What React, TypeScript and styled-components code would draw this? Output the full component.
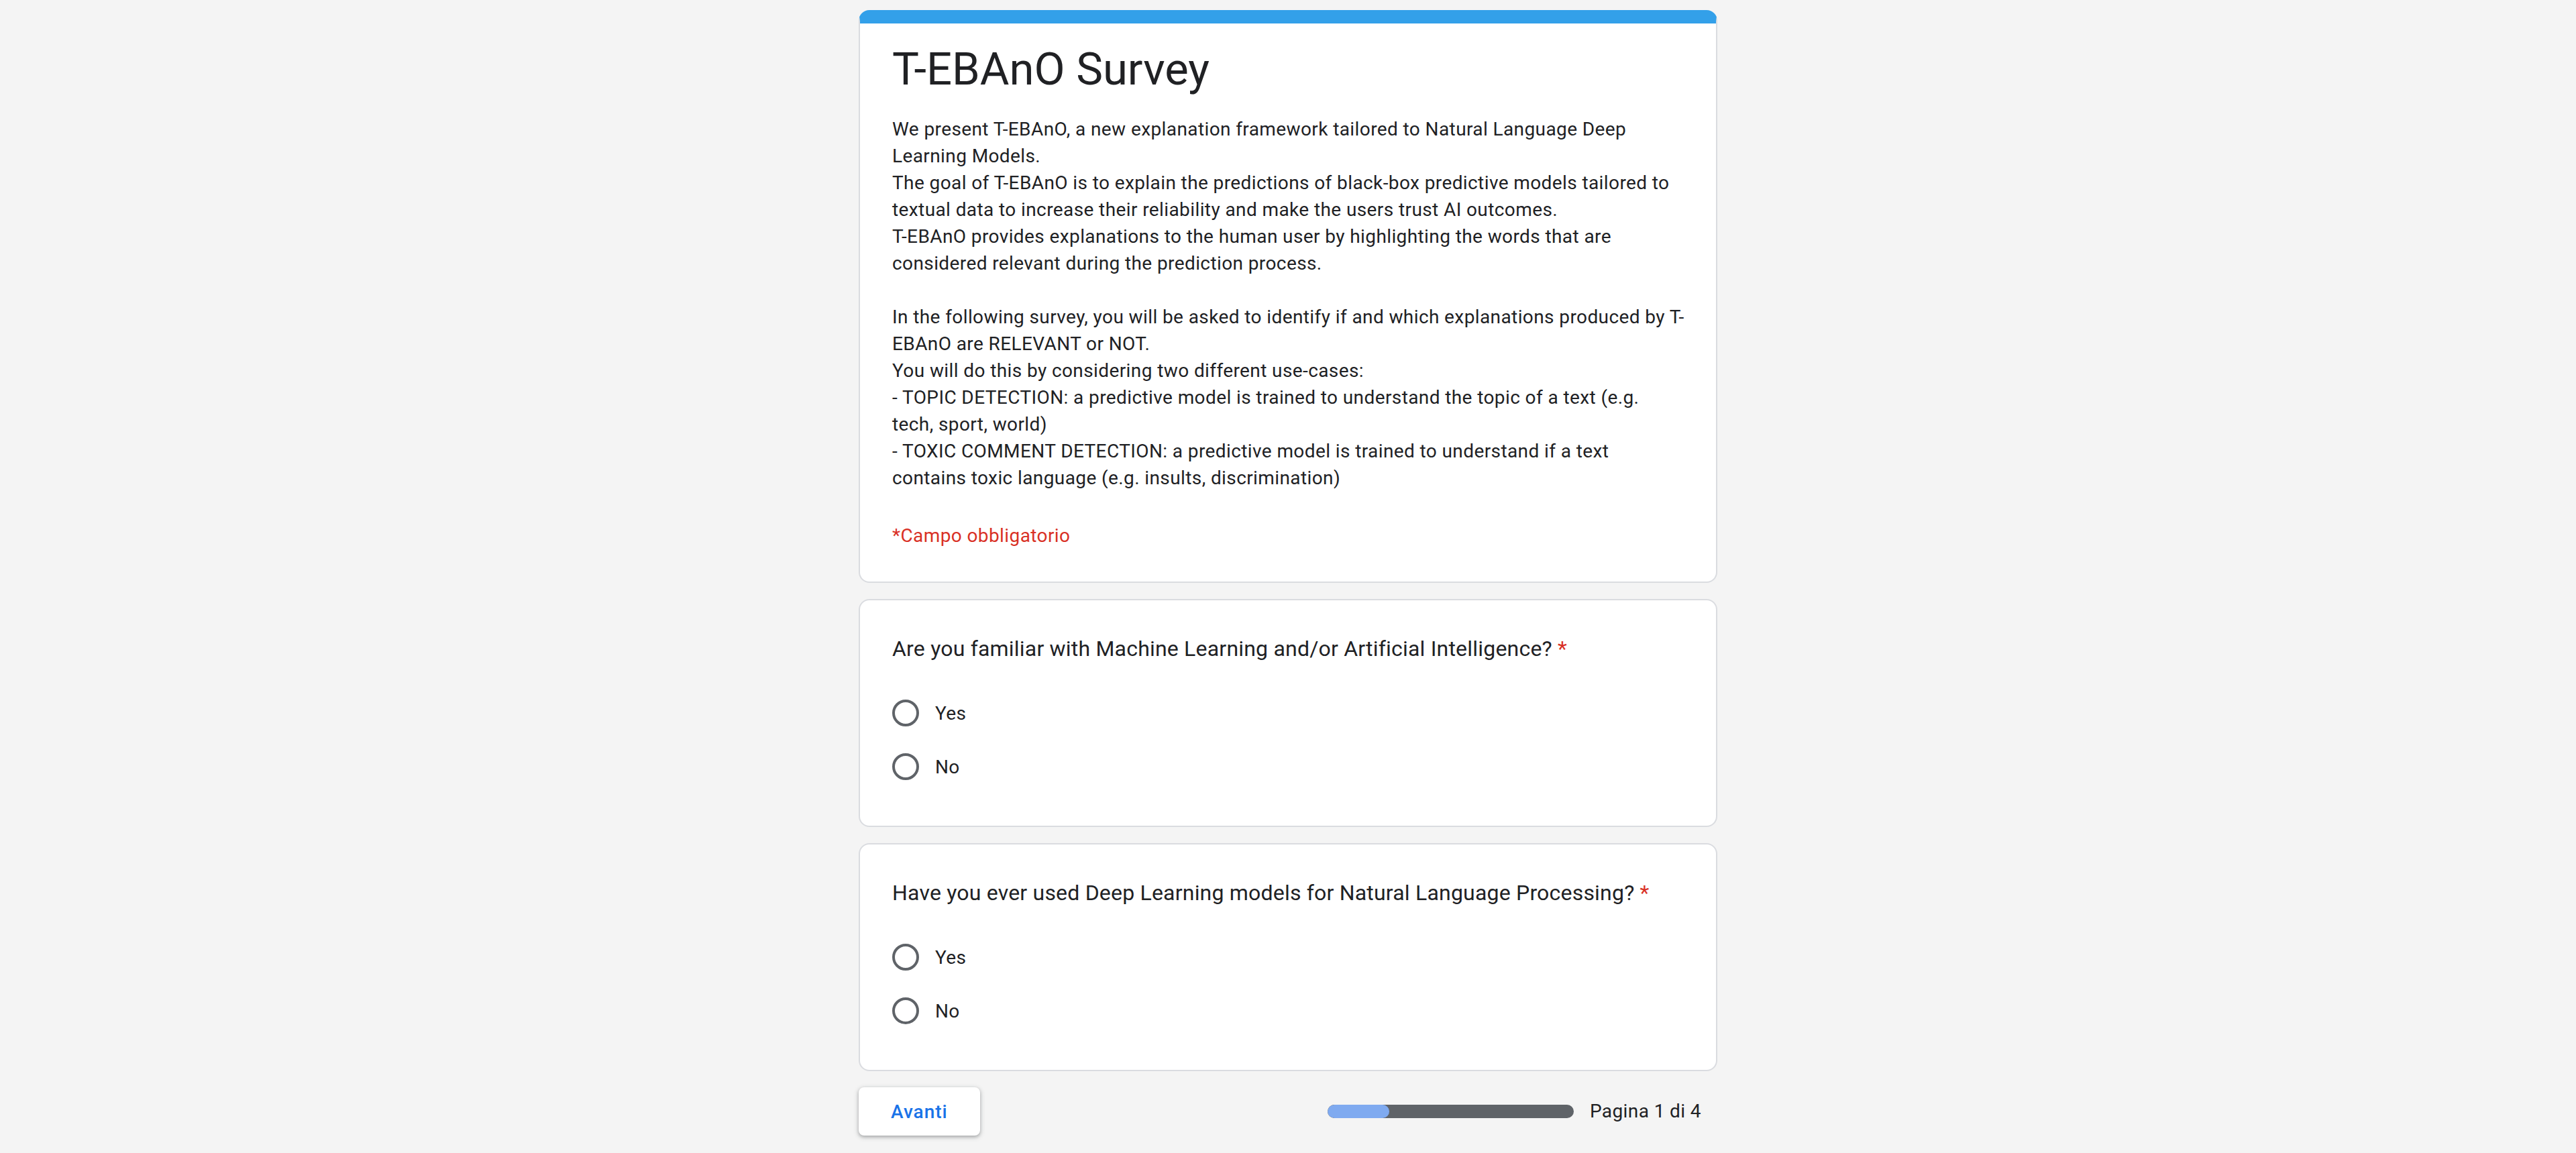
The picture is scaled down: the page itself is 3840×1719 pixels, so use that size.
import React from 'react';
import styled, { createGlobalStyle } from 'styled-components';

const GlobalStyle = createGlobalStyle`
  html, body {
    margin: 0;
    padding: 0;
    background: #f4f4f4;
  }
  body {
    font-family: Roboto, "Liberation Sans", Arial, sans-serif;
    color: #202124;
  }
`;

const Page = styled.div`
  min-height: 100vh;
  background: #f4f4f4;
  padding-top: 15px;
  box-sizing: border-box;
`;

const Column = styled.div`
  width: 1280px;
  margin: 0 auto;
  display: flex;
  flex-direction: column;
  gap: 24px;
`;

const Card = styled.section<{ $accent?: string }>`
  background: #fff;
  border: 2px solid #dadce0;
  border-top: ${(p) => (p.$accent ? `20px solid ${p.$accent}` : '2px solid #dadce0')};
  border-radius: 16px;
  padding: ${(p) => (p.$accent ? '28px 48px 48px' : '48px')};
  box-sizing: border-box;
`;

const Title = styled.h1`
  margin: 0;
  font-family: Roboto, "Liberation Sans", sans-serif;
  font-weight: 400;
  font-size: 67px;
  line-height: 80px;
  color: #202124;
`;

const Description = styled.div`
  margin-top: 30px;
  font-size: 28px;
  line-height: 40px;
  letter-spacing: 0.4px;
  color: #202124;
`;

const Line = styled.div`
  white-space: nowrap;
  min-height: 40px;
`;

const Required = styled.div`
  margin-top: 46px;
  font-size: 28px;
  line-height: 40px;
  letter-spacing: 0.4px;
  color: #d93025;
`;

const Question = styled.div`
  font-size: 32px;
  line-height: 48px;
  letter-spacing: 0.2px;
  color: #202124;
`;

const Star = styled.span`
  color: #d93025;
  padding-left: 8px;
`;

const Options = styled.div`
  margin-top: 32px;
  display: flex;
  flex-direction: column;
`;

const Option = styled.label`
  height: 80px;
  display: flex;
  align-items: center;
  gap: 24px;
  font-size: 28px;
  letter-spacing: 0.4px;
  color: #202124;
  cursor: pointer;
`;

const Radio = styled.span`
  width: 40px;
  height: 40px;
  border: 4px solid #5f6368;
  border-radius: 50%;
  box-sizing: border-box;
  flex: none;
`;

const Footer = styled.div`
  display: flex;
  align-items: center;
  justify-content: space-between;
  height: 72px;
`;

const NextButton = styled.button`
  height: 72px;
  padding: 0 48px;
  border: none;
  border-radius: 8px;
  background: #fff;
  color: #1a73e8;
  font-family: Roboto, "Liberation Sans", sans-serif;
  font-size: 28px;
  font-weight: 500;
  letter-spacing: 1px;
  box-shadow: 0 2px 4px 0 rgba(60, 64, 67, 0.3), 0 2px 6px 2px rgba(60, 64, 67, 0.15);
  cursor: pointer;
`;

const Progress = styled.div`
  display: flex;
  align-items: center;
  gap: 24px;
  padding-right: 24px;
`;

const Track = styled.div`
  width: 367px;
  height: 20px;
  border-radius: 10px;
  background: #5f6368;
  overflow: hidden;
`;

const Fill = styled.div`
  height: 100%;
  border-radius: 10px;
  background: #7faaf0;
`;

const PageLabel = styled.span`
  font-size: 28px;
  line-height: 40px;
  letter-spacing: 0.4px;
  color: #202124;
`;

const descriptionLines = [
  'We present T-EBAnO, a new explanation framework tailored to Natural Language Deep',
  'Learning Models.',
  'The goal of T-EBAnO is to explain the predictions of black-box predictive models tailored to',
  'textual data to increase their reliability and make the users trust AI outcomes.',
  'T-EBAnO provides explanations to the human user by highlighting the words that are',
  'considered relevant during the prediction process.',
  '',
  'In the following survey, you will be asked to identify if and which explanations produced by T-',
  'EBAnO are RELEVANT or NOT.',
  'You will do this by considering two different use-cases:',
  '- TOPIC DETECTION: a predictive model is trained to understand the topic of a text (e.g.',
  'tech, sport, world)',
  '- TOXIC COMMENT DETECTION: a predictive model is trained to understand if a text',
  'contains toxic language (e.g. insults, discrimination)',
];

const questions = [
  'Are you familiar with Machine Learning and/or Artificial Intelligence?',
  'Have you ever used Deep Learning models for Natural Language Processing?',
];

const current = 1;
const total = 4;

const App: React.FC = () => {
  return (
    <>
      <GlobalStyle />
      <Page>
        <Column>
          <Card $accent="#33a0e9">
            <Title>T-EBAnO Survey</Title>
            <Description>
              {descriptionLines.map((line, i) => (
                <Line key={i}>{line}</Line>
              ))}
            </Description>
            <Required>*Campo obbligatorio</Required>
          </Card>

          {questions.map((q) => (
            <Card key={q}>
              <Question>
                {q}
                <Star>*</Star>
              </Question>
              <Options>
                <Option>
                  <Radio />
                  Yes
                </Option>
                <Option>
                  <Radio />
                  No
                </Option>
              </Options>
            </Card>
          ))}

          <Footer>
            <NextButton>Avanti</NextButton>
            <Progress>
              <Track>
                <Fill style={{ width: `${(current / total) * 100}%` }} />
              </Track>
              <PageLabel>
                Pagina {current} di {total}
              </PageLabel>
            </Progress>
          </Footer>
        </Column>
      </Page>
    </>
  );
};

export default App;
